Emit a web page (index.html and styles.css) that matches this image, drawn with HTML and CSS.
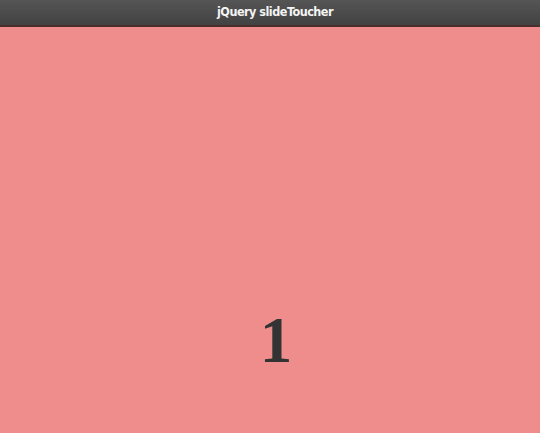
FILE: index.html
```
<!DOCTYPE html>
<html>
<head>
<meta charset="utf-8">
<link rel="stylesheet" href="styles.css">
</head>
<body>
<header class="topbar"><h1 class="title">jQuery slideToucher</h1></header>
<main class="slide"><div class="num">1</div></main>
</body>
</html>
```
FILE: styles.css
```
html, body { margin: 0; padding: 0; height: 100%; }
body { background: #ef8c8c; overflow: hidden; }
.topbar {
  height: 25px;
  background: linear-gradient(#555555, #424242);
  border-bottom: 2px solid #4a2e2e;
  display: flex;
  align-items: center;
  justify-content: center;
}
.title {
  margin: 0;
  color: #f4f4f4;
  font-family: "DejaVu Sans Condensed", "DejaVu Sans", sans-serif;
  font-weight: bold;
  font-size: 12.5px;
  letter-spacing: -0.5px;
  padding-left: 10px;
  line-height: 1;
}
.slide {
  height: 406px;
  box-sizing: border-box;
  padding-top: 281px;
  display: flex;
  justify-content: center;
  align-items: flex-start;
}
.num {
  font-family: "Liberation Serif", serif;
  font-weight: bold;
  font-size: 65px;
  line-height: 1;
  color: #333333;
  padding-left: 12px;
}
```
